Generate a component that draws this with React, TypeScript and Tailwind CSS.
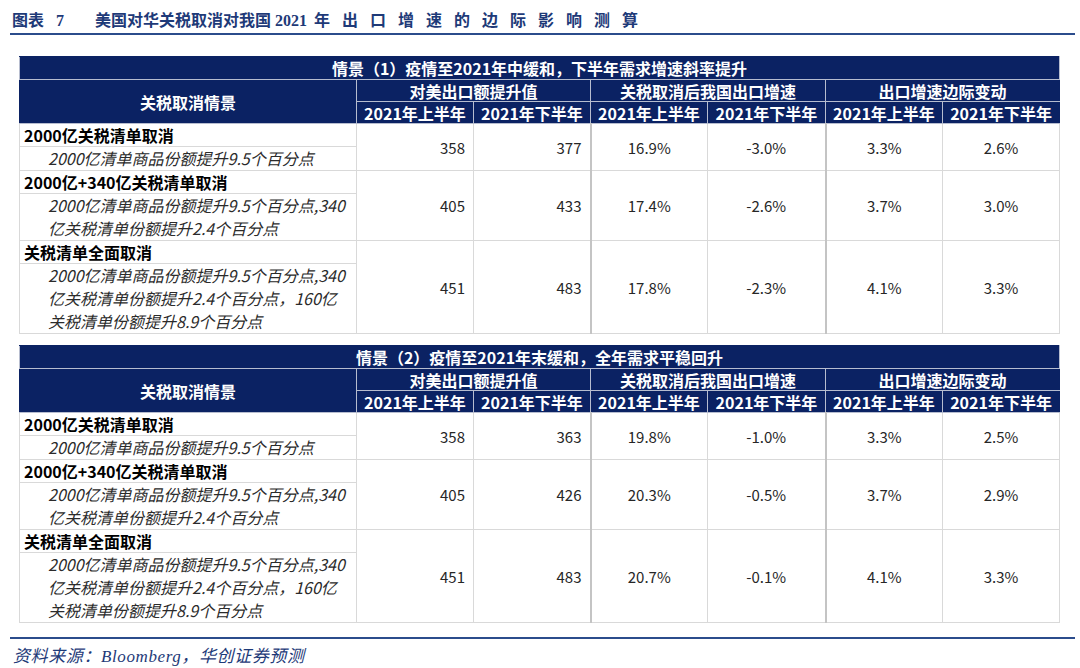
import React from "react";

type Row = { title: string; lines: string[]; v: string[] };

const scen1: Row[] = [
  {
    title: "2000亿关税清单取消",
    lines: ["2000亿清单商品份额提升9.5个百分点"],
    v: ["358", "377", "16.9%", "-3.0%", "3.3%", "2.6%"],
  },
  {
    title: "2000亿+340亿关税清单取消",
    lines: ["2000亿清单商品份额提升9.5个百分点,340", "亿关税清单份额提升2.4个百分点"],
    v: ["405", "433", "17.4%", "-2.6%", "3.7%", "3.0%"],
  },
  {
    title: "关税清单全面取消",
    lines: [
      "2000亿清单商品份额提升9.5个百分点,340",
      "亿关税清单份额提升2.4个百分点，160亿",
      "关税清单份额提升8.9个百分点",
    ],
    v: ["451", "483", "17.8%", "-2.3%", "4.1%", "3.3%"],
  },
];

const scen2: Row[] = [
  { ...scen1[0], v: ["358", "363", "19.8%", "-1.0%", "3.3%", "2.5%"] },
  { ...scen1[1], v: ["405", "426", "20.3%", "-0.5%", "3.7%", "2.9%"] },
  { ...scen1[2], v: ["451", "483", "20.7%", "-0.1%", "4.1%", "3.3%"] },
];

const subHeights: Record<number, string> = { 1: "h-[24px]", 2: "h-[47px]", 3: "h-[70px]" };

function Scenario({ heading, rows }: { heading: string; rows: Row[] }) {
  const th = "bg-[#0b2263] text-white font-bold text-[16px] leading-none border border-[#b7bdcf] p-0";
  const years = ["2021年上半年", "2021年下半年", "2021年上半年", "2021年下半年", "2021年上半年", "2021年下半年"];
  return (
    <table className="table-fixed border-collapse w-[1040px] ml-[19px]">
      <colgroup>
        <col className="w-[337px]" />
        <col className="w-[117px]" />
        <col className="w-[117px]" />
        <col className="w-[117px]" />
        <col className="w-[118px]" />
        <col className="w-[117px]" />
        <col className="w-[117px]" />
      </colgroup>
      <thead>
        <tr>
          <th colSpan={7} className={`${th} h-[23px] border-t-[#0b2263]`}>{heading}</th>
        </tr>
        <tr>
          <th rowSpan={2} className={`${th} border-l-[#0b2263]`}>关税取消情景</th>
          <th colSpan={2} className={`${th} h-[22px]`}>对美出口额提升值</th>
          <th colSpan={2} className={`${th} h-[22px]`}>关税取消后我国出口增速</th>
          <th colSpan={2} className={`${th} h-[22px] border-r-[#0b2263]`}>出口增速边际变动</th>
        </tr>
        <tr>
          {years.map((y, i) => (
            <th key={i} className={`${th} h-[22px] ${i === 5 ? "border-r-[#0b2263]" : ""}`}>{y}</th>
          ))}
        </tr>
      </thead>
      <tbody className="text-[16px]">
        {rows.map((r, ri) => (
          <React.Fragment key={ri}>
            <tr>
              <td className="h-[23px] p-0 pl-[4px] border border-[#d9d9d9] font-bold text-black leading-none whitespace-nowrap">
                {r.title}
              </td>
              {r.v.map((val, i) => (
                <td
                  key={i}
                  rowSpan={2}
                  className={`p-0 border border-[#d9d9d9] text-[#262626] text-[15px] leading-none ${
                    i < 2 ? "text-right pr-[8px]" : "text-center"
                  } ${i === 2 || i === 4 ? "border-l-2 border-l-[#c4c4c4]" : ""}`}
                >
                  {val}
                </td>
              ))}
            </tr>
            <tr>
              <td
                className={`${subHeights[r.lines.length]} p-0 pl-[28px] border border-[#d9d9d9] italic text-[#2b2b2b] text-[16px] whitespace-nowrap align-middle`}
              >
                {r.lines.map((l, li) => (
                  <div key={li} className="leading-[23px]">
                    {l}
                  </div>
                ))}
              </td>
            </tr>
          </React.Fragment>
        ))}
      </tbody>
    </table>
  );
}

export default function App() {
  return (
    <div
      className="w-[1080px] h-[668px] bg-white overflow-hidden"
      style={{ fontFamily: '"Noto Sans CJK SC", "Liberation Sans", sans-serif' }}
    >
      <div className="pt-[8px] pl-[12px] h-[33px] flex items-center text-[#1e3a78] text-[16px] font-bold leading-none font-['Liberation_Serif','Noto_Sans_CJK_SC',serif]">
        <span>图表</span>
        <span className="ml-[12px]">7</span>
        <span className="ml-[31px]">美国对华关税取消对我国 2021</span>
        <span className="ml-[7px] tracking-[12px]">年出口增速的边际影响测算</span>
      </div>
      <div className="ml-[10px] w-[1065px] h-[2px] bg-[#2b4c8c]" />
      <div className="h-[21px]" />
      <Scenario heading="情景（1）疫情至2021年中缓和，下半年需求增速斜率提升" rows={scen1} />
      <div className="h-[11px]" />
      <Scenario heading="情景（2）疫情至2021年末缓和，全年需求平稳回升" rows={scen2} />
      <div className="mt-[14px] ml-[10px] w-[1065px] h-[2px] bg-[#2b4c8c]" />
      <div className="pl-[13px] pt-[9px] text-[17px] tracking-[0.6px] italic text-[#1e3a78] leading-none font-['Liberation_Serif','Noto_Sans_CJK_SC',serif]">
        资料来源：Bloomberg，华创证券预测
      </div>
    </div>
  );
}
